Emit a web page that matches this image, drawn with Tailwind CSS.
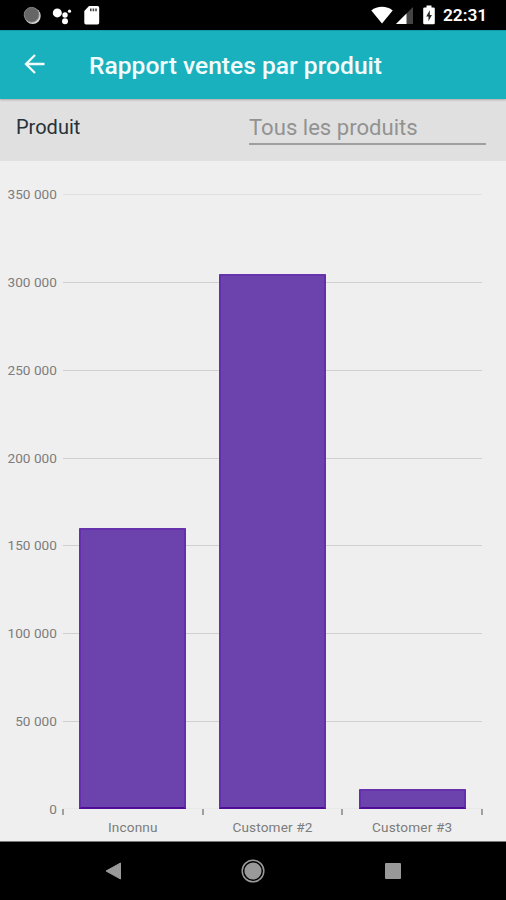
<!DOCTYPE html>
<html lang="fr">
<head>
  <meta charset="UTF-8" />
  <meta name="viewport" content="width=device-width, initial-scale=1.0" />
  <title>Rapport ventes par produit</title>
  <script src="https://cdn.jsdelivr.net/npm/@tailwindcss/browser@4"></script>
</head>
<body class="font-[Roboto,sans-serif] w-[506px] h-[900px] overflow-hidden flex flex-col bg-[#efefef]">
  <!-- Barre de statut -->
  <div class="h-[30px] shrink-0 bg-black text-white flex items-center pl-[23px] pr-[20px]">
    <svg class="w-[19px] h-[19px]" viewBox="0 0 19 19">
      <circle cx="9.7" cy="10" r="8" fill="#d8d8d8" />
      <circle cx="8.6" cy="8.8" r="7.4" fill="#666" stroke="#858585" />
    </svg>
    <svg class="ml-[10px] w-[20px] h-[19px]" viewBox="0 0 20 19" fill="#fff">
      <circle cx="5.3" cy="6.9" r="4.5" />
      <circle cx="13" cy="9" r="2.7" />
      <circle cx="17.5" cy="5.2" r="1.6" />
      <circle cx="13" cy="15.3" r="3" />
    </svg>
    <svg class="ml-[11px] w-[17px] h-[20px]" viewBox="0 0 17 20">
      <path d="M6 1h8.5a1.7 1.7 0 0 1 1.7 1.7v15a1.7 1.7 0 0 1-1.7 1.7H3a1.7 1.7 0 0 1-1.7-1.7V6z" fill="#fff" />
      <path d="M7.8 3.6v2.6M10.4 3.6v2.6M13 3.6v2.6" stroke="#444" stroke-width="1.6" />
    </svg>
    <svg class="ml-auto w-[22px] h-[18px]" viewBox="0 0 22 18">
      <path d="M11 17.5.3 4.4C3.2 2 7 .7 11 .7S18.8 2 21.7 4.4z" fill="#fff" />
    </svg>
    <svg class="ml-[3px] w-[17px] h-[17px]" viewBox="0 0 17 17">
      <path d="M17 0v17H0z" fill="#444" />
      <path d="M10.5 6.5V17H0z" fill="#fff" />
    </svg>
    <svg class="ml-[9px] w-[14px] h-[20px]" viewBox="0 0 14 20">
      <path d="M4.5.5h5v2h2a1.3 1.3 0 0 1 1.3 1.3V18a1.3 1.3 0 0 1-1.3 1.3h-9A1.3 1.3 0 0 1 1.2 18V3.800a1.3 1.3 0 0 1 1.3-1.3h2z" fill="#fff" />
      <path d="M7.800 5.300 4.200 11.500h2.300v4.800l3.400-6.200H7.800z" fill="#222" />
    </svg>
    <span class="ml-[7px] pt-[2px] w-[43px] text-[17.3px] leading-none font-semibold whitespace-nowrap">22:31</span>
  </div>

  <!-- En-tête -->
  <header class="h-[69px] shrink-0 bg-[#1ab1be] text-[#f2fcfc] flex items-center pl-[24px] border-t border-[#129ba8] relative z-10 shadow-[0_1px_2px_rgba(90,60,60,0.35)]">
    <svg class="w-[21px] h-[20px] mb-[3px]" viewBox="0 0 21 20" fill="none" stroke="currentColor" stroke-width="2.3">
      <path d="M20.500 10H2.200M11 1 2 10l9 9" />
    </svg>
    <h1 class="ml-[44px] pt-[3px] text-[24.6px] leading-none font-medium whitespace-nowrap">Rapport ventes par produit</h1>
  </header>

  <!-- Filtre -->
  <section class="h-[62px] shrink-0 bg-[#e0e0e0] flex justify-between items-start pl-[16px] pr-[20px]">
    <label class="pt-[17px] text-[20px] leading-[22px] text-[#263238]">Produit</label>
    <div class="w-[237px] h-[46px] pt-[15px] border-b-2 border-[#9da09f] text-[22.1px] leading-[26px] text-[#929292]">Tous les produits</div>
  </section>

  <!-- Graphique -->
  <main class="relative h-[680px] shrink-0 pt-[25px] text-[13.6px] leading-[16px] text-[#7c7c7c]">
    <div class="h-[631px] flex flex-col justify-between pr-[24px]">
      <div class="flex items-center h-[16px]"><span class="w-[57px] text-right tracking-[0.05px]">350 000</span><i class="ml-[6px] mt-px grow h-px bg-[#e2e2e2]"></i></div>
      <div class="flex items-center h-[16px]"><span class="w-[57px] text-right tracking-[0.05px]">300 000</span><i class="ml-[6px] mt-px grow h-px bg-[#cfcfcf]"></i></div>
      <div class="flex items-center h-[16px]"><span class="w-[57px] text-right tracking-[0.05px]">250 000</span><i class="ml-[6px] mt-px grow h-px bg-[#cfcfcf]"></i></div>
      <div class="flex items-center h-[16px]"><span class="w-[57px] text-right tracking-[0.05px]">200 000</span><i class="ml-[6px] mt-px grow h-px bg-[#cfcfcf]"></i></div>
      <div class="flex items-center h-[16px]"><span class="w-[57px] text-right tracking-[0.05px]">150 000</span><i class="ml-[6px] mt-px grow h-px bg-[#cfcfcf]"></i></div>
      <div class="flex items-center h-[16px]"><span class="w-[57px] text-right tracking-[0.05px]">100 000</span><i class="ml-[6px] mt-px grow h-px bg-[#cfcfcf]"></i></div>
      <div class="flex items-center h-[16px]"><span class="w-[57px] text-right tracking-[0.05px]">50 000</span><i class="ml-[6px] mt-px grow h-px bg-[#cfcfcf]"></i></div>
      <div class="flex items-center h-[16px]"><span class="w-[57px] text-right tracking-[0.05px]">0</span><i class="ml-[6px] grow h-px bg-[#e8e8e8]"></i></div>
    </div>

    <!-- Barres au-dessus de la grille -->
    <div class="absolute left-[63px] top-0 w-[419px] h-[648px] grid grid-cols-3 items-end justify-items-center">
      <div class="w-[107px] rounded-t-[1px] bg-[#6c42ac] border-2 border-t-[#6733ac] border-x-[#642fac] border-b-[#4f0c99]" style="height: 281px"></div>
      <div class="w-[107px] rounded-t-[1px] bg-[#6c42ac] border-2 border-t-[#6733ac] border-x-[#642fac] border-b-[#4f0c99]" style="height: 535px"></div>
      <div class="w-[107px] rounded-t-[1px] bg-[#6c42ac] border-2 border-t-[#6733ac] border-x-[#642fac] border-b-[#4f0c99]" style="height: 20px"></div>
    </div>

    <!-- Graduations -->
    <div class="absolute left-[62px] top-[648px] w-[421px] h-[6px] flex justify-between">
      <i class="w-[2px] bg-[#a0a0a0]"></i>
      <i class="w-[2px] bg-[#a0a0a0]"></i>
      <i class="w-[2px] bg-[#a0a0a0]"></i>
      <i class="w-[2px] bg-[#a0a0a0]"></i>
    </div>

    <div class="ml-[63px] w-[419px] mt-[2px] grid grid-cols-3 text-center">
      <span class="tracking-[0.15px]">Inconnu</span>
      <span class="tracking-[0.15px]">Customer #2</span>
      <span class="tracking-[0.15px]">Customer #3</span>
    </div>
  </main>

  <!-- Navigation -->
  <nav class="h-[59px] shrink-0 bg-black border-t border-[#777] flex items-center justify-between px-[105px]">
    <svg class="w-[16px] h-[18px]" viewBox="0 0 16 18"><path d="M15.500 1v16L1 9z" fill="#999" stroke="#999" stroke-linejoin="round" /></svg>
    <svg class="w-[24px] h-[24px]" viewBox="0 0 24 24">
      <circle cx="12" cy="12" r="10.8" fill="none" stroke="#999" stroke-width="1.5" />
      <circle cx="12" cy="12" r="8.6" fill="#999" />
    </svg>
    <svg class="w-[16px] h-[16px]" viewBox="0 0 16 16"><rect width="16" height="16" rx="1" fill="#999" /></svg>
  </nav>
</body>
</html>
